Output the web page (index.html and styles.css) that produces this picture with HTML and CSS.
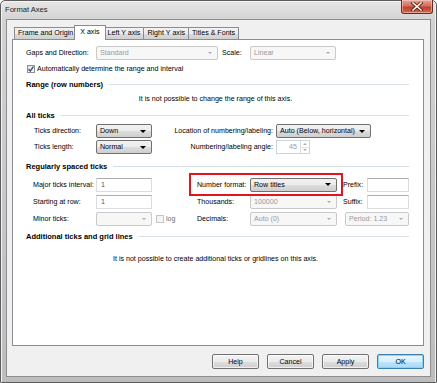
FILE: index.html
```html
<!DOCTYPE html>
<html lang="en">
<head>
    <meta charset="UTF-8">
    <title>Format Axes</title>
    <link rel="stylesheet" href="styles.css">
</head>
<body>

    <div class="window">
        <div class="titlebar">
            <span class="title">Format Axes</span>
            <div class="close-btn">
                <svg width="12" height="9" viewBox="0 0 12 9">
                    <path d="M2 1 L10 8 M10 1 L2 8" stroke="#5a1c14" stroke-width="3.2" stroke-linecap="square"/>
                    <path d="M2 1 L10 8 M10 1 L2 8" stroke="#ffffff" stroke-width="1.6" stroke-linecap="square"/>
                </svg>
            </div>
        </div>

        <div class="client">
            <div class="tabs">
                <div class="tab">Frame and Origin</div>
                <div class="tab active">X axis</div>
                <div class="tab">Left Y axis</div>
                <div class="tab">Right Y axis</div>
                <div class="tab">Titles &amp; Fonts</div>
            </div>

            <div class="panel">
                <div class="row gaps-row">
                    <span class="lbl gaps-lbl">Gaps and Direction:</span>
                    <div class="combo disabled gaps-combo">Standard<i class="arrow"></i></div>
                    <span class="lbl scale-lbl">Scale:</span>
                    <div class="combo disabled scale-combo">Linear<i class="arrow"></i></div>
                </div>

                <div class="row check-row">
                    <span class="check">
                        <svg width="6" height="6" viewBox="0 0 6 6"><path d="M0.6 3.2 L2.3 5 L5.4 0.6" fill="none" stroke="#2a4a8c" stroke-width="1.3"/></svg>
                    </span>
                    Automatically determine the range and interval
                </div>

                <div class="group-title range-title">Range (row numbers)</div>
                <div class="note range-note">It is not possible to change the range of this axis.</div>

                <div class="group-title ticks-title">All ticks</div>
                <div class="ticks-grid">
                    <span class="lbl">Ticks direction:</span>
                    <div class="combo">Down<i class="arrow"></i></div>
                    <span class="lbl right">Location of numbering/labeling:</span>
                    <div class="combo">Auto (Below, horizontal)<i class="arrow"></i></div>

                    <span class="lbl">Ticks length:</span>
                    <div class="combo">Normal<i class="arrow"></i></div>
                    <span class="lbl right">Numbering/labeling angle:</span>
                    <div class="spin">
                        <span class="spin-val">45</span>
                        <span class="spin-btns"><i class="up"></i><i class="down"></i></span>
                    </div>
                </div>

                <div class="group-title spaced-title">Regularly spaced ticks</div>
                <div class="spaced-grid">
                    <span class="lbl">Major ticks interval:</span>
                    <div class="field">1</div>
                    <span></span>
                    <span class="lbl">Number format:</span>
                    <div class="combo">Row titles<i class="arrow"></i></div>
                    <span></span>
                    <span class="lbl">Prefix:</span>
                    <div class="field"></div>

                    <span class="lbl">Starting at row:</span>
                    <div class="field">1</div>
                    <span></span>
                    <span class="lbl">Thousands:</span>
                    <div class="combo disabled">100000<i class="arrow"></i></div>
                    <span></span>
                    <span class="lbl">Suffix:</span>
                    <div class="field"></div>

                    <span class="lbl">Minor ticks:</span>
                    <div class="combo disabled"><i class="arrow"></i></div>
                    <span class="log"><span class="check off"></span>log</span>
                    <span class="lbl">Decimals:</span>
                    <div class="combo disabled">Auto (0)<i class="arrow"></i></div>
                    <span></span>
                    <div class="combo disabled period">Period: 1.23<i class="arrow"></i></div>

                    <div class="highlight"></div>
                </div>

                <div class="group-title extra-title">Additional ticks and grid lines</div>
                <div class="note extra-note">It is not possible to create additional ticks or gridlines on this axis.</div>
            </div>

            <div class="buttons">
                <button class="btn">Help</button>
                <button class="btn">Cancel</button>
                <button class="btn">Apply</button>
                <button class="btn default">OK</button>
            </div>
        </div>
    </div>

</body>
</html>
```

FILE: styles.css
```css
body {
    margin: 0;
    padding: 0;
    font-family: "Liberation Sans", Arial, sans-serif;
    font-size: 7.1px;
    color: #000;
    background: #fff;
}

.window {
    width: 437px;
    height: 383px;
    box-sizing: border-box;
    display: flex;
    flex-direction: column;
    border: 1px solid #5c5c5c;
    border-radius: 5px 5px 1px 1px;
    background: linear-gradient(#e6e6e6, #d2d2d2 20px, #c6c6c6 60%, #bdbdbd);
    box-shadow: inset 1px 1px 0 #f4f4f4, inset -1px 0 0 #f0f0f0;
}

.titlebar {
    height: 18px;
    display: flex;
    align-items: flex-start;
    justify-content: space-between;
    padding-left: 4px;
}

.title {
    font-size: 7.6px;
    line-height: 18px;
    color: #1c1c1c;
}

.close-btn {
    width: 30px;
    height: 13px;
    margin-right: 3px;
    margin-top: -1px;
    display: flex;
    align-items: center;
    justify-content: center;
    border: 1px solid #6a2a22;
    border-top: none;
    border-radius: 0 0 3px 3px;
    background: linear-gradient(#e6a394, #d2705e 45%, #c0402c 55%, #cf6a50);
    box-shadow: inset 0 0 0 1px rgba(255, 220, 210, 0.5);
}

.client {
    flex: 1;
    margin: 0 5px 5px 5px;
    box-sizing: border-box;
    border: 1px solid #8e8e8e;
    background: #f0f0f0;
    padding: 5px 6px 0 5px;
}

/* tabs */

.tabs {
    display: flex;
    height: 14px;
    padding-left: 2px;
    position: relative;
    z-index: 1;
}

.tab {
    height: 12px;
    margin-top: 2px;
    padding: 0 3px;
    box-sizing: border-box;
    line-height: 11px;
    border: 1px solid #898c95;
    border-bottom: none;
    margin-right: -1px;
    background: linear-gradient(#f2f2f2, #ebebeb 50%, #dddddd 51%, #cfcfcf);
    white-space: nowrap;
}

.tab.active {
    height: 15px;
    margin-top: 0;
    margin-left: -2px;
    margin-right: -2px;
    padding: 0 5px;
    line-height: 12px;
    background: #fff;
    position: relative;
    z-index: 2;
}

.panel {
    height: 307px;
    box-sizing: border-box;
    border: 1px solid #898c95;
    background: #fff;
    padding: 6px 14px 0 13px;
}

/* rows */

.row {
    display: flex;
    align-items: center;
}

.gaps-row {
    height: 14px;
}

.gaps-lbl {
    width: 70px;
}

.gaps-combo {
    width: 122px;
}

.scale-lbl {
    width: 28px;
    margin-left: 4px;
}

.scale-combo {
    width: 86px;
}

.check-row {
    height: 17px;
}

.check {
    width: 8px;
    height: 8px;
    box-sizing: border-box;
    margin: 0 2px 0 1px;
    border: 1px solid #8f8f8f;
    background: linear-gradient(135deg, #dcdcdc, #fbfbfb);
    display: inline-flex;
    align-items: center;
    justify-content: center;
}

.check.off {
    border-color: #c5c5c5;
    background: #f4f4f4;
    margin: 0 2px 0 4px;
}

.group-title {
    display: flex;
    align-items: center;
    font-weight: bold;
    font-size: 7.5px;
    white-space: nowrap;
}

.group-title::after {
    content: "";
    flex: 1;
    height: 1px;
    margin-left: 6px;
    background: #d5dfe5;
}

.range-title { height: 14px; }
.ticks-title { height: 16px; }
.spaced-title { height: 19px; padding-top: 2px; }
.extra-title { height: 18px; }

.note {
    display: flex;
    align-items: center;
    justify-content: center;
    padding-right: 4px;
}

.range-note { height: 16px; }
.extra-note { height: 28px; }

/* grids */

.ticks-grid {
    display: grid;
    grid-template-columns: 62px 56px 124px 95px;
    grid-auto-rows: 16px;
    align-items: center;
    padding-left: 8px;
}

.lbl {
    white-space: nowrap;
}

.lbl.right {
    text-align: right;
    padding-right: 3px;
}

.spaced-grid {
    position: relative;
    display: grid;
    grid-template-columns: 63px 56px 45px 53px 87px 6px 24px 42px;
    grid-auto-rows: 17px;
    align-items: center;
    padding-left: 7px;
}

.log {
    display: flex;
    align-items: center;
    color: #6d6d6d;
}

.period {
    grid-column: 7 / span 2;
    margin-left: 2px;
}

.highlight {
    position: absolute;
    left: 163px;
    top: -3px;
    width: 154px;
    height: 23px;
    box-sizing: border-box;
    border: 2px solid #e3141f;
}

/* controls */

.combo {
    height: 14px;
    box-sizing: border-box;
    display: flex;
    align-items: center;
    padding: 0 5px 0 3px;
    border: 1px solid #707070;
    border-radius: 2px;
    background: linear-gradient(#f2f2f2, #ebebeb 50%, #dddddd 51%, #cfcfcf);
    white-space: nowrap;
}

.combo .arrow {
    margin-left: auto;
    width: 0;
    height: 0;
    border-left: 3px solid transparent;
    border-right: 3px solid transparent;
    border-top: 3px solid #000;
}

.combo.disabled {
    color: #9a9a9a;
    border-color: #c9c9c9;
    background: #f7f7f7;
}

.combo.disabled .arrow {
    border-left-width: 2px;
    border-right-width: 2px;
    border-top: 2px solid #a8a8a8;
}

.field {
    height: 14px;
    box-sizing: border-box;
    display: flex;
    align-items: center;
    padding-left: 4px;
    border: 1px solid #d9dde2;
    border-top-color: #abadb3;
    background: #fff;
    color: #555;
}

.spin {
    width: 34px;
    height: 14px;
    box-sizing: border-box;
    display: flex;
    border: 1px solid #d0d3d8;
    background: #fff;
    color: #9a9a9a;
}

.spin-val {
    flex: 1;
    text-align: right;
    padding-right: 3px;
    line-height: 12px;
}

.spin-btns {
    width: 8px;
    display: flex;
    flex-direction: column;
    border-left: 1px solid #dcdcdc;
}

.spin-btns i {
    flex: 1;
    display: flex;
    align-items: center;
    justify-content: center;
}

.spin-btns .up {
    border-bottom: 1px solid #e4e4e4;
}

.spin-btns .up::after {
    content: "";
    border-left: 2px solid transparent;
    border-right: 2px solid transparent;
    border-bottom: 2px solid #b0b0b0;
}

.spin-btns .down::after {
    content: "";
    border-left: 2px solid transparent;
    border-right: 2px solid transparent;
    border-top: 2px solid #b0b0b0;
}

/* dialog buttons */

.buttons {
    display: flex;
    justify-content: flex-end;
    gap: 8px;
    margin-top: 8px;
}

.btn {
    width: 47px;
    height: 15px;
    padding: 0;
    font-family: "Liberation Sans", Arial, sans-serif;
    font-size: 7.1px;
    color: #000;
    border: 1px solid #707070;
    border-radius: 2px;
    background: linear-gradient(#f2f2f2, #ebebeb 50%, #dddddd 51%, #cfcfcf);
    box-shadow: inset 0 0 0 1px rgba(255, 255, 255, 0.7);
}

.btn.default {
    border-color: #3c7fb1;
    background: linear-gradient(#eaf6fd, #d9f0fc 50%, #bee6fd 51%, #a7d9f5);
    box-shadow: inset 0 0 0 1px #8ed3f5;
}
```
